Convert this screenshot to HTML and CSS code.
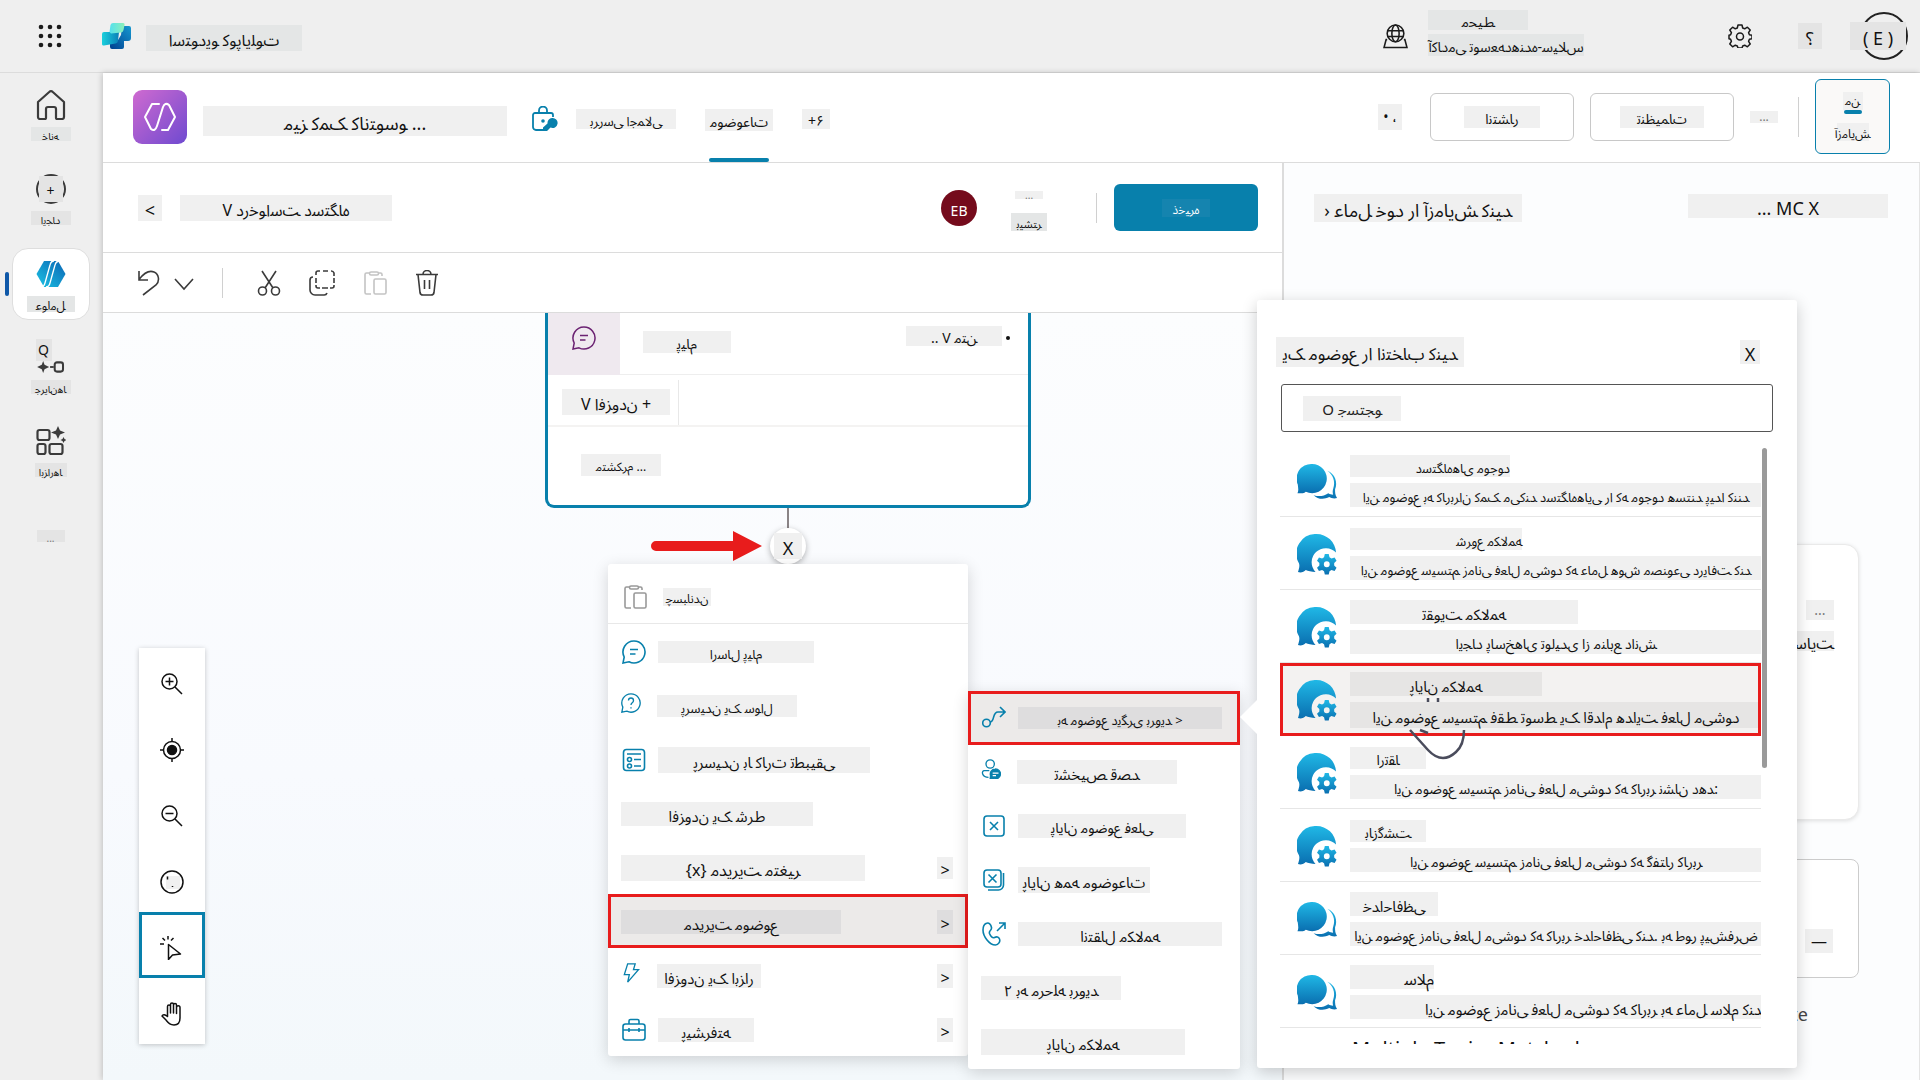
FILE: index.html
```html
<!DOCTYPE html>
<html lang="fa" dir="ltr">
<head>
<meta charset="utf-8">
<title>استودیو کوپایلوت</title>
<link rel="stylesheet" href="styles.css">
</head>
<body>
<svg class="sprite" aria-hidden="true">
  <defs>
    <linearGradient id="blue" x1="0" y1="0" x2="0" y2="1"><stop offset="0" stop-color="#20b8e6"/><stop offset="1" stop-color="#0a6fb0"/></linearGradient>
    <linearGradient id="teal" x1="0" y1="0" x2="1" y2="0"><stop offset="0" stop-color="#1bd0dc"/><stop offset="1" stop-color="#0a7fb8"/></linearGradient>
    <linearGradient id="deep" x1="1" y1="0" x2="0" y2="1"><stop offset="0" stop-color="#1698d0"/><stop offset="1" stop-color="#003f8f"/></linearGradient>
    <linearGradient id="mint" x1="0" y1="0" x2="1" y2="0"><stop offset="0" stop-color="#55e0ee"/><stop offset="1" stop-color="#8cf0b8"/></linearGradient>
    <linearGradient id="hex" x1="1" y1="0" x2="0" y2="1"><stop offset="0" stop-color="#0a64b4"/><stop offset="1" stop-color="#1cc4e4"/></linearGradient>
  </defs>
  <symbol id="i-chat" viewBox="0 0 24 24"><path d="M12 1a11 11 0 1 1-5 20.800L1 23l1.200-6A11 11 0 0 1 12 1ZM8 9.500h8M8 14h5.500"/></symbol>
  <symbol id="i-paste" viewBox="0 0 24 24"><path d="M8 23H3.500A1.500 1.500 0 0 1 2 21.500v-18A1.500 1.500 0 0 1 3.500 2H7M15 2h2.500A1.500 1.500 0 0 1 19 3.500V5M8 1h6a1 1 0 0 1 0 3H8a1 1 0 0 1 0-3ZM12.500 8h9A1.500 1.500 0 0 1 23 9.500v12a1.500 1.500 0 0 1-1.500 1.500h-9a1.500 1.500 0 0 1-1.500-1.500v-12A1.500 1.500 0 0 1 12.500 8Z"/></symbol>
  <symbol id="i-topic" viewBox="0 0 42 42"><path fill="url(#blue)" d="M15 3a15 15 0 1 1-6 28.500 5 5 0 0 1-3 1.500H.500C2 30 1 27 .800 24A15 15 0 0 1 15 3Z"/><path fill="url(#blue)" d="M31 10c8 3 11 12 8 19 0 3 0 6 2 9-3 1-6 0-8-1-6 3-12 2-16-2 5 1.500 10 1.500 15-2 2 1 3 1.500 5 1.500-.600-2-.600-4 .200-6.500C39.500 21 37 14 31 10Z"/></symbol>
  <symbol id="i-system" viewBox="0 0 42 42"><path fill="url(#blue)" d="M20 0a20 20 0 0 1 20 19 14 14 0 0 0-21 20c-4 0-8-1-10-2-2 2-5 3-8 2 1-3 2-6 1-9A20 20 0 0 1 20 0Z"/><path fill="url(#blue)" fill-rule="evenodd" d="M28.500 20.500h4l.800 3.300 2 1.200 3.200-1 2 3.500-2.400 2.300v2.400l2.400 2.300-2 3.500-3.200-1-2 1.200-.800 3.300h-4l-.800-3.300-2-1.200-3.200 1-2-3.500 2.400-2.300v-2.400l-2.400-2.300 2-3.500 3.200 1 2-1.200ZM30.500 28a3 3 0 1 0 0 6 3 3 0 0 0 0-6Z"/></symbol>
</svg>

<header class="topbar">
  <button class="plain" aria-label="برنامه‌ها"><svg class="waffle" viewBox="0 0 24 24"><g fill="#1b1b1b"><circle cx="3" cy="3" r="2.300"/><circle cx="12" cy="3" r="2.300"/><circle cx="21" cy="3" r="2.300"/><circle cx="3" cy="12" r="2.300"/><circle cx="12" cy="12" r="2.300"/><circle cx="21" cy="12" r="2.300"/><circle cx="3" cy="21" r="2.300"/><circle cx="12" cy="21" r="2.300"/><circle cx="21" cy="21" r="2.300"/></g></svg></button>
  <svg class="logo" viewBox="0 0 30 28"><path fill="url(#deep)" d="M20 4h7a2 2 0 0 1 2 2v10a3 3 0 0 1-3 3h-4v6a2 2 0 0 1-2 2h-10a2 2 0 0 1-2-2v-6l8-1 3-5Z"/><path fill="url(#teal)" d="M2 10h15l-1 9a3 3 0 0 1-2.500 2.500L2 23.500a1.500 1.500 0 0 1-2-1.500V12a2 2 0 0 1 2-2Z"/><path fill="url(#mint)" d="M11 1h10a1.500 1.500 0 0 1 1.500 2l-1 5a3 3 0 0 1-2.500 2.500L9 11.500 7.500 10l1-7A3 3 0 0 1 11 1Z"/></svg>
  <h1 class="patch cool w156 h26 s16 low brand">استودیو کوپایلوت</h1>
  <div class="env">
    <svg class="env-icon" viewBox="0 0 24 24"><g fill="none" stroke="#1b1b1b" stroke-width="1.500"><circle cx="12" cy="9" r="8"/><ellipse cx="12" cy="9" rx="3.500" ry="8"/><path d="M4.500 6.500h15M4.500 12h15M4 15H3l-2 7.500h22L21 15h-1"/></g></svg>
    <div class="env-text"><span class="patch cool w100 h20 s14 low">محیط</span><span class="patch cool w156 h22 s14 low">آکادمی توسعه‌دهنده-سیلاس</span></div>
  </div>
  <button class="plain gear" aria-label="تنظیمات"><svg viewBox="0 0 24 24" width="24" height="24"><path fill="none" stroke="#1b1b1b" stroke-width="1.500" stroke-linejoin="round" d="M10 1h4l.700 3 2 .800 2.700-1.600 2.800 2.800-1.600 2.700.800 2 2.600.600v3.400l-2.600.600-.800 2 1.600 2.700-2.800 2.800-2.700-1.600-2 .800-.700 2h-4l-.700-2-2-.800-2.700 1.600L1.800 20l1.600-2.700-.800-2-1.600-.600v-3.400l1.600-.600.800-2L1.800 6l2.800-2.800 2.700 1.600 2-.800Z"/><circle cx="12" cy="12.500" r="3.500" fill="none" stroke="#1b1b1b" stroke-width="1.500"/></svg></button>
  <button class="plain"><span class="patch dim w24 h26 s18 low">؟</span></button>
  <button class="avatar"><span class="patch dim w56 h28 s18 low">( E )</span></button>
</header>

<div class="shell">
  <nav class="rail">
    <a href="#" class="rail-item"><svg class="ri" viewBox="0 0 30 30"><path fill="none" stroke="#3b3b3b" stroke-width="2.200" stroke-linejoin="round" d="M2 12 13.500 1.800a2 2 0 0 1 3 0L28 12v15a2 2 0 0 1-2 2h-5a1 1 0 0 1-1-1v-9a2 2 0 0 0-2-2h-6a2 2 0 0 0-2 2v9a1 1 0 0 1-1 1H4a2 2 0 0 1-2-2Z"/></svg><span class="patch cool w40 h14 s10 low">خانه</span></a>
    <a href="#" class="rail-item"><span class="ring"><span class="patch dim w24 h26 s14 low">+</span></span><span class="patch dim w40 h14 s10 low">ایجاد</span></a>
    <a href="#" class="rail-item current"><svg class="ri" viewBox="0 0 30 30"><path fill="url(#hex)" d="M8 2h14l7.500 13L22 28H8L.500 15Z"/><path d="M18 2q-3 0-4 4L9 24q-1 4-4 4M24 2q-4 0-5 4l-5 18q-1 4-4 4" fill="none" stroke="#fff" stroke-width="1.300"/></svg><span class="patch cool w48 h16 s12 low">عوامل</span></a>
    <a href="#" class="rail-item"><span class="flow"><span class="patch dim w16 h22 s14">Q</span><svg width="30" height="13" viewBox="0 0 30 13"><path fill="#3b3b3b" d="M6.500 0 8 4l5 2.500L8 9l-1.500 4L5 9 0 6.500 5 4Z"/><path d="M14 6.500h4" stroke="#3b3b3b" stroke-width="2"/><rect x="19" y="1.500" width="9" height="10" rx="2.500" fill="none" stroke="#3b3b3b" stroke-width="2.200"/></svg></span><span class="patch dim w40 h14 s10 low">جریان‌ها</span></a>
    <a href="#" class="rail-item"><svg class="ri" viewBox="0 0 30 30"><g fill="none" stroke="#3b3b3b" stroke-width="2.200"><rect x="1.500" y="4" width="12" height="10" rx="2"/><rect x="1.500" y="18" width="8" height="10" rx="2"/><rect x="13.500" y="18" width="13" height="10" rx="2"/></g><path fill="#3b3b3b" d="m22 0 2 4.500 5 2-5 2-2 4.500-2-4.500-5-2 5-2ZM27.500 11l1 2 2 1-2 1-1 2-1-2-2-1 2-1Z"/></svg><span class="patch dim w32 h14 s10 low">ابزارها</span></a>
    <a href="#" class="rail-item last"><span class="patch dim w28 h12 s10 low muted">...</span></a>
  </nav>

  <main class="main">
    <section class="agentbar">
      <svg class="agent" viewBox="0 0 54 54"><defs><linearGradient id="pu" x1="0" y1="0" x2="1" y2="1"><stop offset="0" stop-color="#cf6ad0"/><stop offset="1" stop-color="#6f4ad0"/></linearGradient></defs><rect width="54" height="54" rx="9" fill="url(#pu)"/><path fill="none" stroke="#fff" stroke-width="2" stroke-linecap="round" stroke-linejoin="round" d="M26 14h-7l-7 13 6 12q4 3 6-3l6-19q2-5 6-2l6 12-7 13h-6"/></svg>
      <h2 class="patch w304 h30 s18 low agent-name">میز کمک کانتوسو ...</h2>
      <svg class="lock" viewBox="0 0 26 26"><g fill="none" stroke="#0880ac" stroke-width="1.800"><path d="M11 24H4a3 3 0 0 1-3-3V9a2 2 0 0 1 2-2h16a2 2 0 0 1 2 2v2M7 7V4.500a4 4 0 0 1 8 0V7"/></g><circle cx="11" cy="15" r="1.800" fill="#0880ac"/><path fill="#0880ac" d="M20 12a5 5 0 1 1-1.500 9.500L15 25h-4v-3.500l4.500-4A5 5 0 0 1 20 12Z"/></svg>
      <a href="#" class="tab"><span class="patch w100 h20 s13 low">بررسی اجمالی</span></a>
      <a href="#" class="tab on"><span class="patch w68 h22 s14 low">موضوعات</span></a>
      <a href="#" class="tab"><span class="patch w28 h20 s14 low">+۶</span></a>
      <div class="agent-actions">
        <span class="patch w24 h26 s14 gap12">• ،</span>
        <button class="btn"><span class="patch w76 h22 s14 low">انتشار</span></button>
        <button class="btn"><span class="patch w84 h22 s14 low">تنظیمات</span></button>
        <span class="patch w28 h12 s12 muted gap4">...</span>
        <span class="rule"></span>
        <button class="test"><span class="patch w20 h18 s12">من</span><i class="bar"></i><span class="patch w32 h18 s12 low">آزمایش</span></button>
      </div>
    </section>

    <div class="columns">
      <div class="editor">
        <section class="topicbar">
          <button class="plain"><span class="patch w24 h26 s18 low">&lt;</span></button>
          <h3 class="patch w212 h26 s16 low">V درخواست دستگاه</h3>
          <div class="topic-actions">
            <span class="eb">EB</span>
            <button class="plain more"><span class="patch w28 h8 s10 muted">...</span><span class="patch cool w36 h18 s11 low">بیشتر</span></button>
            <span class="rule"></span>
            <button class="save"><span class="patch w48 h18 s12 low">ذخیره</span></button>
          </div>
        </section>
        <section class="tools">
          <button class="plain" aria-label="واگرد"><svg width="22" height="26" viewBox="0 0 22 26"><path d="M1 1v9h9M1 9.500C6 3 11 0 16 2c5 2 6 9 2 13L5 25"/></svg></button>
          <button class="plain g14" aria-label="بیشتر"><svg width="20" height="26" viewBox="0 0 20 26"><path d="m1 9 9 10 9-10"/></svg></button>
          <span class="rule tall"></span>
          <button class="plain" aria-label="برش"><svg width="24" height="26" viewBox="0 0 24 26"><path d="M5 1 16 18M19 1 8 18"/><circle cx="5.500" cy="21" r="4"/><circle cx="18.500" cy="21" r="4"/></svg></button>
          <button class="plain g28" aria-label="کپی"><svg width="26" height="26" viewBox="0 0 26 26"><path d="M11 1H9a2 2 0 0 0-2 2v2M7 8v5M7 15v1a2 2 0 0 0 2 2h2M14 1h5M22 1a3 3 0 0 1 3 2v3M25 8v5M25 15v1a2 2 0 0 1-2 2h-2M13 18h6M4 7a3 3 0 0 0-3 3v10a5 5 0 0 0 5 5h9a3 3 0 0 0 3-2"/></svg></button>
          <button class="plain g28 off" aria-label="چسباندن" disabled><svg width="24" height="26"><use href="#i-paste"/></svg></button>
          <button class="plain g28" aria-label="حذف"><svg width="24" height="26" viewBox="0 0 24 26"><path d="M1 4.500h22M8 4.500a4 4 0 0 1 8 0M3 4.500l2 18A3 3 0 0 0 8 25h8a3 3 0 0 0 3-2.500l2-18M9.500 10v9M14.500 10v9"/></svg></button>
        </section>

        <section class="canvas">
          <article class="node">
            <div class="node-head"><span class="node-mark"><svg width="24" height="24"><use href="#i-chat"/></svg></span><span class="patch w88 h22 s14 low">پیام</span><span class="patch w96 h20 s14 low push">.. V متن</span><b class="dot"></b></div>
            <div class="node-row"><button class="plain"><span class="patch w108 h26 s16 low">V افزودن +</span></button><span class="rule full"></span></div>
            <p class="node-text"><span class="patch w80 h22 s12 low">متشکرم ...</span></p>
          </article>
          <i class="wire"></i>
          <button class="add"><span class="patch w28 h26 s18 low">X</span></button>
          <svg class="pointer" viewBox="0 0 112 30"><path fill="#e81c1c" d="M5 10h77V0l29 15-29 15V20H5a5 5 0 0 1 0-10Z"/></svg>

          <div class="zoombar">
            <button class="plain" aria-label="بزرگ‌نمایی"><svg viewBox="0 0 24 24"><circle cx="9.500" cy="9.500" r="7.500"/><path d="m15 15 7 7M9.500 5.500v8M5.500 9.500h8"/></svg></button>
            <button class="plain" aria-label="مرکز"><svg viewBox="0 0 24 24"><circle cx="12" cy="12" r="8.500"/><circle cx="12" cy="12" r="4.500" fill="#111"/><path d="M12 0v4M12 20v4M0 12h4M20 12h4"/></svg></button>
            <button class="plain" aria-label="کوچک‌نمایی"><svg viewBox="0 0 24 24"><circle cx="9.500" cy="9.500" r="7.500"/><path d="m15 15 7 7M5.500 9.500h8"/></svg></button>
            <button class="plain" aria-label="نقشه"><svg viewBox="0 0 24 24"><path d="M6 6h14v13H6Z" fill="#f0f0f0" stroke="none"/><circle cx="12" cy="12" r="11"/><path d="M7.500 6.500v3M12.500 16v1"/></svg></button>
            <button class="plain on" aria-label="انتخاب"><svg viewBox="0 0 24 24"><path d="M8.500 8.500v15l4-4.500 8-1ZM8 0v3.500M2.500 2l2.500 2.500M13.500 2 11 4.500M0 8h4"/></svg></button>
            <button class="plain" aria-label="دست"><svg viewBox="0 0 24 24"><path d="M7.500 13V4.500a1.500 1.500 0 0 1 3 0V11V2.500a1.500 1.500 0 0 1 3 0V11V3a1.500 1.500 0 0 1 3 0v8.500V5.500a1.500 1.500 0 0 1 3.500 0V16c0 4-1.500 7-6 7-4 0-5-1.500-8-5L2 14c1-2 3-1.500 5.500.500Z"/></svg></button>
          </div>

          <div class="menu main-menu">
            <button class="item first"><svg class="grey"><use href="#i-paste"/></svg><span class="patch w48 h18 s12 low">چسباندن</span></button>
            <button class="item"><svg><use href="#i-chat"/></svg><span class="patch w156 h22 s13 low">ارسال پیام</span></button>
            <button class="item"><svg class="small" viewBox="0 0 24 24"><path d="M12 1a11 11 0 1 1-5 20.800L1 23l1.200-6A11 11 0 0 1 12 1ZM9 9c0-4 6-4 6 0 0 3-3 2.500-3 5.500M12 17v1.500"/></svg><span class="patch w140 h22 s13 low">پرسیدن یک سوال</span></button>
            <button class="item"><svg viewBox="0 0 24 24"><rect x="1.500" y="1.500" width="21" height="21" rx="3"/><path d="M5 6h14M12 11.500h7M12 18h7"/><circle cx="7.500" cy="11.500" r="2"/><circle cx="7.500" cy="18" r="2"/></svg><span class="patch w212 h26 s15 low">پرسیدن با کارت تطبیقی</span></button>
            <button class="item"><span class="patch w192 h24 s15 low">افزودن یک شرط</span></button>
            <button class="item"><span class="patch w244 h26 s16 low">{x} مدیریت متغیر</span><span class="patch w16 h22 s16 low push">&gt;</span></button>
            <button class="item chosen"><span class="patch w220 h24 s15 low">مدیریت موضوع</span><span class="patch w16 h24 s16 low push">&gt;</span></button>
            <button class="item"><svg class="small" viewBox="0 0 24 24"><path d="M8 1h9l-2 7h6L8 23l2-9H4Z"/></svg><span class="patch w104 h24 s15 low">افزودن یک ابزار</span><span class="patch w16 h24 s16 low push">&gt;</span></button>
            <button class="item"><svg viewBox="0 0 24 24"><rect x="1" y="6" width="22" height="16" rx="2.500"/><path d="M7 6V3a1.500 1.500 0 0 1 1.500-1.500h7A1.500 1.500 0 0 1 17 3v3M1 12h22M7 10v4M17 10v4"/></svg><span class="patch w96 h24 s15 low">پیشرفته</span><span class="patch w16 h24 s16 low push">&gt;</span></button>
          </div>

          <div class="menu sub-menu">
            <button class="item chosen"><svg viewBox="0 0 24 24"><circle cx="4.500" cy="17" r="3.800"/><path d="M8 16c5 0 2-10 8-10h7M18 1l5 5-5 5"/></svg><span class="patch w204 h22 s13 low">به موضوع دیگری بروید &gt;</span></button>
            <button class="item"><svg class="small" viewBox="0 0 24 24"><circle cx="11" cy="6" r="5"/><path d="M10 14H4c-4 0-3 8 5 8"/><path d="M17 12a6 6 0 1 1-2 11.500l-4 .500.500-4A6 6 0 0 1 17 12Z" fill="#0880ac"/><path d="M14 17h7M14 20h4" stroke="#fff"/></svg><span class="patch w160 h24 s15 low">تشخیص قصد</span></button>
            <button class="item"><svg viewBox="0 0 24 24"><rect x="2" y="2" width="20" height="20" rx="3"/><path d="m8 8 8 8M16 8l-8 8"/></svg><span class="patch w168 h24 s14 low">پایان موضوع فعلی</span></button>
            <button class="item"><svg viewBox="0 0 24 24"><rect x="2" y="2" width="17" height="17" rx="3"/><path d="m6.500 6.500 8 8M14.500 6.500l-8 8M21.500 5v12a5 5 0 0 1-5 5H6"/></svg><span class="patch w132 h26 s15 low">پایان همه موضوعات</span></button>
            <button class="item"><svg viewBox="0 0 24 24"><path d="M4 1.500c3-1.500 5 1 5.500 4s-3 3-2 6c1 2.500 3 5 5 4s4-1 5 1.500-1 6-4 6C7 23 1 14 1 8c0-3 1-5.500 3-6.500ZM17 1h6v6M23 1l-8 8"/></svg><span class="patch w204 h24 s15 low">انتقال مکالمه</span></button>
            <button class="item"><span class="patch w140 h24 s15 low">۲ به مرحله بروید</span></button>
            <button class="item"><span class="patch w204 h26 s15 low">پایان مکالمه</span></button>
          </div>

          <div class="flyout" role="dialog">
            <div class="fly-head"><h4 class="patch w188 h30 s17 low">یک موضوع را انتخاب کنید</h4><button class="plain"><span class="patch w20 h24 s18 low">X</span></button></div>
            <label class="search"><input class="s15" type="text" value="O جستجو" aria-label="جستجو"></label>
            <div class="list">
              <div class="topic"><svg><use href="#i-topic"/></svg><div><span class="patch w160 h22 s13 low end">دستگاه‌های موجود</span><span class="patch w412 h24 s13 low">این موضوع به کاربران کمک می‌کند دستگاه‌هایی را که موجود هستند پیدا کنند</span></div></div>
              <div class="topic"><svg><use href="#i-system"/></svg><div><span class="patch w172 h22 s13 low end">شروع مکالمه</span><span class="patch w412 h24 s13 low">این موضوع سیستم زمانی فعال می‌شود که عامل هوش مصنوعی دریافت کند</span></div></div>
              <div class="topic"><svg><use href="#i-system"/></svg><div><span class="patch w228 h24 s15 low">تقویت مکالمه</span><span class="patch w412 h24 s14 low">ایجاد پاسخ‌های تولیدی از منابع دانش</span></div></div>
              <div class="topic picked"><svg><use href="#i-system"/></svg><div><span class="patch w192 h24 s15 low">پایان مکالمه</span><span class="patch w412 h26 s15 low">این موضوع سیستم فقط توسط یک اقدام هدایت فعال می‌شود</span></div></div>
              <div class="topic"><svg><use href="#i-system"/></svg><div><span class="patch w76 h22 s14 low">ارتقا</span><span class="patch w412 h24 s14 low">این موضوع سیستم زمانی فعال می‌شود که کاربر نشان دهد:</span></div></div>
              <div class="topic"><svg><use href="#i-system"/></svg><div><span class="patch w76 h22 s14 low">بازگشت</span><span class="patch w412 h24 s14 low">این موضوع سیستم زمانی فعال می‌شود که گفتار کاربر</span></div></div>
              <div class="topic"><svg><use href="#i-topic"/></svg><div><span class="patch w88 h24 s15 low">خداحافظی</span><span class="patch w412 h24 s14 low">این موضوع زمانی فعال می‌شود که کاربر خداحافظی کند. به طور پیش‌فرض</span></div></div>
              <div class="topic"><svg><use href="#i-topic"/></svg><div><span class="patch w84 h24 s16 low end">سلام</span><span class="patch w412 h24 s15 low end">این موضوع زمانی فعال می‌شود که کاربر به عامل سلام کند</span></div></div>
              <div class="topic cut"><span>Multiple Topics Matched</span></div>
            </div>
            <i class="thumb"></i>
            <svg class="hand" viewBox="0 0 60 62"><g fill="none" stroke="#4a4c5c" stroke-width="2.500"><path d="M19 0v4M29 0v4M1 32l18 20q14 15 28 2 8-7 8-22M11 32l8 3"/></g></svg>
          </div>
        </section>
      </div>

      <aside class="tester">
        <div class="tester-head"><h3 class="patch w208 h28 s18 low">› عامل خود را آزمایش کنید</h3><span class="patch w200 h24 s18 low">... MC X</span></div>
        <div class="bubble"><span class="patch w28 h20 s14 muted">...</span><span class="patch w40 h20 s16 low">سایت</span></div>
        <div class="ask"><span class="patch w28 h24 s16">—</span></div>
        <p class="note">appropriate</p>
      </aside>
    </div>
  </main>
</div>
<script src="shape.js"></script>
</body>
</html>
```
FILE: styles.css
```css
* { box-sizing: border-box; }
body { margin: 0; height: 100vh; overflow: hidden; display: flex; flex-direction: column; background: #efefef; color: #111; font-family: "Noto Sans", "Noto Sans Arabic", "DejaVu Sans", sans-serif; font-size: 14px; }
h1, h2, h3, h4, p { margin: 0; font-weight: 400; }
a { color: inherit; text-decoration: none; }
button { font-family: inherit; color: inherit; padding: 0; }
.sprite { position: absolute; width: 0; height: 0; }
.plain { border: 0; background: none; display: flex; align-items: center; }

/* text labels run strictly left to right */
.patch { display: flex; flex: none; align-items: center; justify-content: center; background: #f0f0f0; white-space: nowrap; direction: ltr; unicode-bidi: bidi-override; line-height: 20px; }
.cool { background: #e4e6e6; }
.dim { background: #e4e4e4; }
.low { padding-top: 4px; }
.end { justify-content: flex-end; }
.muted { color: #777; }
.push { margin-left: auto; }
.s10 { font-size: 10px; }
.s11 { font-size: 11px; }
.s12 { font-size: 12px; }
.s13 { font-size: 13px; }
.s14 { font-size: 14px; }
.s15 { font-size: 15px; }
.s16 { font-size: 16px; }
.s17 { font-size: 17px; }
.s18 { font-size: 18px; }
.h8 { height: 8px; } .h12 { height: 12px; } .h14 { height: 14px; } .h16 { height: 16px; } .h18 { height: 18px; } .h20 { height: 20px; } .h22 { height: 22px; } .h24 { height: 24px; } .h26 { height: 26px; } .h28 { height: 28px; } .h30 { height: 30px; }
.w16 { width: 16px; } .w20 { width: 20px; } .w24 { width: 24px; } .w28 { width: 28px; } .w32 { width: 32px; } .w36 { width: 36px; } .w40 { width: 40px; } .w48 { width: 48px; } .w56 { width: 56px; } .w68 { width: 68px; } .w76 { width: 76px; } .w80 { width: 80px; } .w84 { width: 84px; } .w88 { width: 88px; } .w96 { width: 96px; } .w100 { width: 100px; } .w104 { width: 104px; } .w108 { width: 108px; } .w132 { width: 132px; } .w140 { width: 140px; } .w156 { width: 156px; } .w160 { width: 160px; } .w168 { width: 168px; } .w172 { width: 172px; } .w188 { width: 188px; } .w192 { width: 192px; } .w200 { width: 200px; } .w204 { width: 204px; } .w208 { width: 208px; } .w212 { width: 212px; } .w220 { width: 220px; } .w228 { width: 228px; } .w244 { width: 244px; } .w304 { width: 304px; } .w412 { width: 412px; }

.topbar { height: 73px; flex: none; display: flex; align-items: center; padding: 0 12px 0 38px; border-bottom: 1px solid #dcdcdc; }
.waffle { width: 24px; height: 24px; }
.logo { width: 30px; height: 28px; margin: 0 14px 0 40px; }
.brand { margin-top: 4px; }
.env { display: flex; align-items: center; gap: 20px; margin-left: auto; margin-right: 144px; }
.env-icon { width: 25px; height: 25px; }
.env-text { display: flex; flex-direction: column; gap: 4px; margin-top: -6px; }
.gear { margin-right: 46px; }
.avatar { width: 48px; height: 48px; margin-left: 38px; border: 2px solid #222; border-radius: 50%; background: none; display: flex; align-items: center; justify-content: flex-end; }

.shell { flex: 1; min-height: 0; display: flex; }
.rail { width: 103px; flex: none; display: flex; flex-direction: column; align-items: center; gap: 32px; padding: 17px 2px 0 0; }
.rail-item { display: flex; flex-direction: column; align-items: center; gap: 7px; height: 52px; width: 78px; flex: none; }
.ri { width: 30px; height: 30px; }
.ring { width: 30px; height: 30px; border: 2px solid #3b3b3b; border-radius: 50%; display: flex; align-items: center; justify-content: center; }
.current { position: relative; height: 72px; margin: -10px 0; padding-top: 10px; background: #fff; border: 1px solid #dedede; border-radius: 16px; }
.current::before { content: ""; position: absolute; left: -8px; top: 23px; width: 4px; height: 24px; border-radius: 2px; background: #0f58a8; }
.flow { display: flex; flex-direction: column; height: 31px; }
.flow .patch { margin-top: -3px; }
.last { padding-top: 20px; }

.main { flex: 1; min-width: 0; display: flex; flex-direction: column; background: #fff; box-shadow: -1px 0 6px rgba(0,0,0,.2); }
.agentbar { height: 90px; flex: none; display: flex; align-items: center; padding: 0 30px 2px 30px; border-bottom: 1px solid #dcdcdc; }
.agent { width: 54px; height: 54px; margin-right: 16px; }
.agent-name { margin-top: 8px; }
.lock { width: 26px; height: 26px; margin: 4px 18px 0 25px; }
.tab { align-self: stretch; display: flex; flex-direction: column; justify-content: space-between; align-items: center; margin: 0 29px -2px 0; padding-top: 36px; }
.tab.on::after { content: ""; width: 60px; height: 4px; border-radius: 2px; background: #0880ac; }
.agent-actions { margin-left: auto; display: flex; align-items: center; gap: 16px; }
.gap12 { margin-right: 12px; }
.gap4 { margin-right: 4px; }
.btn { width: 144px; height: 48px; border: 1px solid #c8c8c8; border-radius: 6px; background: #fff; display: flex; align-items: center; justify-content: center; }
.rule { width: 1px; height: 40px; background: #d0d0d0; }
.test { width: 75px; height: 75px; border: 1px solid #0880ac; border-radius: 6px; background: #faf9f8; display: flex; flex-direction: column; align-items: center; justify-content: center; gap: 0; }
.bar { width: 18px; height: 4px; border-radius: 2px; background: #0880ac; margin-bottom: 9px; }

.columns { flex: 1; min-height: 0; display: flex; }
.editor { flex: 1181; min-width: 0; display: flex; flex-direction: column; position: relative; z-index: 1; }
.topicbar { height: 90px; flex: none; display: flex; align-items: center; gap: 18px; padding: 0 24px 0 35px; border-bottom: 1px solid #dcdcdc; }
.topic-actions { margin-left: auto; display: flex; align-items: center; }
.eb { width: 36px; height: 36px; border-radius: 50%; background: #750b1c; color: #fff; display: flex; align-items: center; justify-content: center; padding-top: 6px; font-size: 14px; }
.more { flex-direction: column; gap: 14px; margin: 6px 49px 0 34px; }
.topic-actions .rule { height: 30px; margin-right: 17px; }
.save { width: 144px; height: 47px; border: 0; border-radius: 6px; background: #0880ac; color: #fff; display: flex; align-items: center; justify-content: center; }
.save .patch { background: #1584af; }
.tools { height: 60px; flex: none; display: flex; align-items: center; padding-left: 35px; border-bottom: 1px solid #dcdcdc; }
.tools svg { fill: none; stroke: #3b3b3b; stroke-width: 1.600px; }
.tools .off svg { stroke: #c4c4c4; }
.g14 { margin-left: 14px; }
.g28 { margin-left: 28px; }
.tall { height: 30px; margin: 0 34px 0 28px; }

.canvas { flex: 1; min-height: 0; position: relative; background: linear-gradient(#fcfdfe, #f8fafe 60%, #f3f8fb); }
.node { position: absolute; left: 442px; top: 0; width: 486px; height: 195px; background: #fff; border: 3px solid #0880ac; border-top: 0; border-radius: 0 0 9px 9px; overflow: hidden; }
.node-head { height: 62px; display: flex; align-items: center; border-bottom: 1px solid #eee; }
.node-mark { width: 72px; height: 62px; background: #efe9ef; display: flex; align-items: center; justify-content: center; padding-bottom: 12px; margin-right: 23px; }
.node-mark svg { fill: none; stroke: #6b2272; stroke-width: 1.500px; }
.node-head .patch { margin-bottom: 4px; }
.node-head .push { margin-bottom: 16px; }
.dot { width: 4px; height: 4px; border-radius: 50%; background: #111; margin: 0 18px 12px 4px; }
.node-row { height: 52px; display: flex; align-items: center; gap: 8px; padding: 4px 0 0 14px; border-bottom: 2px solid #f4f3f2; }
.full { height: 45px; background: #e8e8e8; }
.node-text { padding: 27px 33px; }
.wire { position: absolute; left: 684px; top: 195px; width: 2px; height: 22px; background: #8a8486; }
.add { position: absolute; left: 667px; top: 215px; width: 36px; height: 36px; border: 0; border-radius: 50%; background: #fff; box-shadow: 0 2px 6px rgba(0,0,0,.3); display: flex; align-items: center; justify-content: center; }
.pointer { position: absolute; left: 548px; top: 218px; width: 112px; height: 30px; }
.zoombar { position: absolute; left: 36px; top: 335px; width: 66px; background: #fff; box-shadow: 0 1px 5px rgba(0,0,0,.22); }
.zoombar button { width: 66px; height: 66px; justify-content: center; padding-top: 6px; }
.zoombar .on { border: 3px solid #0880ac; }
.zoombar svg { width: 24px; height: 24px; fill: none; stroke: #111; stroke-width: 1.500px; stroke-linejoin: round; }

.menu { position: absolute; background: #fff; border-radius: 3px; box-shadow: 0 4px 16px rgba(0,0,0,.16); }
.main-menu { left: 505px; top: 251px; width: 360px; }
.sub-menu { left: 865px; top: 378px; width: 272px; }
.item { width: 100%; height: 54px; border: 0; background: none; display: flex; align-items: center; padding: 4px 15px 4px 13px; }
.main-menu .item { padding-top: 6px; }
.item.first { height: 60px; padding-bottom: 0; border-bottom: 1px solid #e8e8e8; }
.item svg { width: 24px; height: 24px; flex: none; margin: 0 12px 0 1px; fill: none; stroke: #0880ac; stroke-width: 1.600px; }
.item .small { width: 20px; height: 20px; margin: 0 16px 6px 0; }
.item .grey { stroke: #999; margin: 0 16px 0 2px; }
.chosen { background: #eceae9; outline: 3px solid #e81c1c; outline-offset: -3px; }
.chosen .patch { background: #deddde; }

.flyout { position: absolute; left: 1154px; top: -13px; width: 540px; height: 768px; padding: 37px 24px 24px 19px; background: #fff; border-radius: 3px; box-shadow: 0 4px 16px rgba(0,0,0,.2); }
.flyout::before { content: ""; position: absolute; left: -12px; top: 405px; width: 24px; height: 24px; background: #fff; transform: rotate(45deg); }
.fly-head { display: flex; justify-content: space-between; align-items: center; padding-right: 13px; }
.search { display: flex; align-items: center; height: 48px; margin: 17px 0 12px 5px; padding-left: 21px; border: 1px solid #555; border-radius: 3px; }
.search input { width: 98px; height: 25px; padding: 4px 0 0; border: 0; background: #f0f0f0; color: #222; font-family: inherit; text-align: center; direction: ltr; unicode-bidi: bidi-override; }
.list { height: 600px; overflow: hidden; margin: 0 12px 0 4px; }
.topic { height: 73px; display: flex; align-items: center; gap: 12px; padding: 2px 0 0 17px; border-bottom: 1px solid #e6e6e6; }
.topic svg { width: 41px; height: 41px; flex: none; }
.topic div { display: flex; flex-direction: column; gap: 6px; }
.picked { background: #f3f2f1; outline: 3px solid #e81c1c; outline-offset: -3px; }
.picked .patch { background: #e6e5e4; }
.cut { align-items: flex-start; padding: 7px 0 0 72px; font-size: 20px; }
.thumb { position: absolute; left: 505px; top: 148px; width: 5px; height: 320px; border-radius: 3px; background: #9a9a9a; }
.hand { position: absolute; left: 152px; top: 398px; width: 60px; height: 62px; }

.tester { flex: 636; min-width: 0; border-left: 2px solid #dcdcdc; border-right: 1px solid #e4e4e4; background: #fcfdfe; }
.tester-head { display: flex; justify-content: space-between; padding: 31px 31px 0 30px; }
.bubble { height: 276px; margin: 322px 60px 0 30px; padding: 55px 24px 0; background: #fff; border: 1px solid #eaeaea; border-radius: 14px; box-shadow: 0 1px 4px rgba(0,0,0,.12); display: flex; flex-direction: column; align-items: flex-end; gap: 11px; }
.ask { height: 119px; margin: 39px 60px 0 30px; padding: 69px 25px 0; background: #fff; border: 1px solid #ccc; border-radius: 8px; display: flex; justify-content: flex-end; }
.note { padding: 24px 111px 0 0; text-align: right; font-size: 18px; color: #444; }
```
FILE: shape.js
```js
// Picks the contextual form of each Arabic-script letter from its neighbours
// in reading order, so that left-to-right labels keep their letter shapes.
const DUAL = { "ب": 0xFE8F, "ت": 0xFE95, "ج": 0xFE9D, "ح": 0xFEA1, "خ": 0xFEA5, "س": 0xFEB1, "ش": 0xFEB5, "ص": 0xFEB9, "ض": 0xFEBD, "ط": 0xFEC1, "ظ": 0xFEC5, "ع": 0xFEC9, "غ": 0xFECD, "ف": 0xFED1, "ق": 0xFED5, "ل": 0xFEDD, "م": 0xFEE1, "ن": 0xFEE5, "ه": 0xFEE9, "پ": 0xFB56, "چ": 0xFB7A, "ک": 0xFB8E, "گ": 0xFB92, "ی": 0xFBFC };
const RIGHT = { "آ": 0xFE81, "ا": 0xFE8D, "د": 0xFEA9, "ذ": 0xFEAB, "ر": 0xFEAD, "ز": 0xFEAF, "و": 0xFEED };

function shape(text) {
  let out = "";
  for (let i = 0; i < text.length; i++) {
    const c = text[i], next = text[i + 1];
    const joinsPrev = text[i - 1] in DUAL;
    if (c === "\u200c") continue;
    if (c === "ل" && next === "ا") {
      out += String.fromCharCode(joinsPrev ? 0xFEFC : 0xFEFB);
      i++;
    } else if (c in DUAL) {
      const joinsNext = next in DUAL || next in RIGHT;
      out += String.fromCharCode(DUAL[c] + (joinsPrev ? 1 : 0) + (joinsNext ? 2 : 0));
    } else if (c in RIGHT) {
      out += String.fromCharCode(RIGHT[c] + (joinsPrev ? 1 : 0));
    } else {
      out += c;
    }
  }
  return out;
}

document.querySelectorAll(".patch").forEach(el => { el.textContent = shape(el.textContent); });
document.querySelectorAll("input").forEach(el => { el.value = shape(el.value); });
```
